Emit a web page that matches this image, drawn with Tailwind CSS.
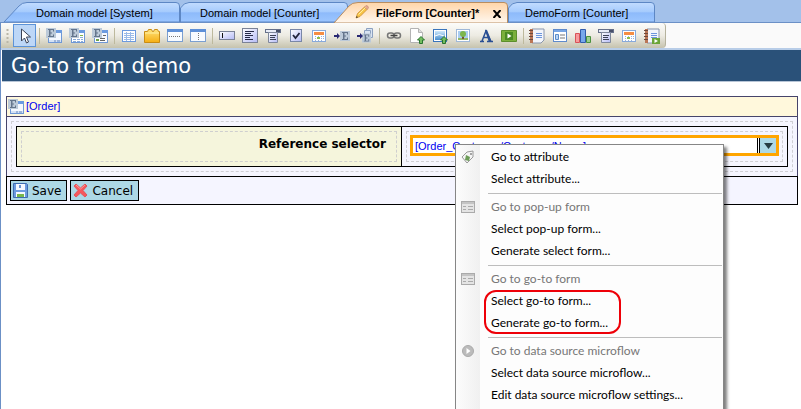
<!DOCTYPE html>
<html lang="en">
<head>
<meta charset="utf-8">
<title>FileForm [Counter]</title>
<script src="https://cdn.jsdelivr.net/npm/@tailwindcss/browser@4"></script>
</head>
<body class="relative flex h-screen flex-col overflow-hidden bg-white font-['Liberation_Sans',sans-serif] text-black">
<svg class="absolute h-0 w-0" aria-hidden="true">
  <defs>
    <linearGradient id="tabBlue" x1="0" y1="0" x2="0" y2="1"><stop offset="0" stop-color="#c2dcff"/><stop offset=".5" stop-color="#a4cafd"/><stop offset=".52" stop-color="#8dbafb"/><stop offset="1" stop-color="#9cc6ff"/></linearGradient>
    <linearGradient id="tabOrange" x1="0" y1="0" x2="0" y2="1"><stop offset="0" stop-color="#ffd5a8"/><stop offset=".5" stop-color="#ffe6cb"/><stop offset="1" stop-color="#fff8f0"/></linearGradient>
    <linearGradient id="gold" x1="0" y1="0" x2="0" y2="1"><stop offset="0" stop-color="#ffe27a"/><stop offset="1" stop-color="#f5ae13"/></linearGradient>
    <linearGradient id="lav" x1="0" y1="0" x2="1" y2="1"><stop offset="0" stop-color="#fff"/><stop offset="1" stop-color="#b4baf6"/></linearGradient>
    <linearGradient id="sky" x1="0" y1="0" x2="0" y2="1"><stop offset="0" stop-color="#cfe8fb"/><stop offset="1" stop-color="#4a90cf"/></linearGradient>
    <symbol id="ebadge" viewBox="0 0 10 10"><rect width="10" height="10" fill="#bccad9"/><path d="M2 1h6v2.500H7V2H4.500v2.500H6v1H4.500V8H7V6.500h1V9H2V8h1V2H2z" fill="#64758c"/></symbol>
    <symbol id="win" viewBox="0 0 16 14"><rect x=".5" y=".5" width="15" height="12" fill="#f8fbff" stroke="#7b9fd0"/><path d="M0 0h16v3H0z" fill="#5e90d8"/></symbol>
    <symbol id="dataview" viewBox="0 0 16 16"><rect x="2.500" y="2.500" width="13" height="12" fill="#f4f8ff" stroke="#6f98d6"/><path d="M3 12h12v2H3z" fill="#d5e2f5"/><path d="M9 2h7v3H9z" fill="#6c9be0"/><path d="M8 13h2m1 0h3" stroke="#6487bd"/><use href="#ebadge" width="10" height="10"/></symbol>
    <symbol id="uparrow" viewBox="0 0 8 8"><path d="M4 .5L7.500 4H5.500v3.500h-3V4H.5z" fill="#74bd60" stroke="#28752d"/></symbol>
    <symbol id="report" viewBox="0 0 16 16"><path d="M3 1h12v11l-3 3H3z" fill="#f3f5fb" stroke="#8a97ad"/><path d="M1 1h3v14H1z" fill="#bb7656"/><path d="M0 2.500h4m-4 3h4m-4 3h4m-4 3h4" stroke="#6f4a3d"/><path d="M7 5.500h6m-6 2h6m-6 2h6" stroke="#6c95dc"/></symbol>
    <symbol id="drop" viewBox="0 0 16 16"><rect x=".5" y="1.500" width="15" height="3" fill="#e9edf8" stroke="#66708a"/><path d="M11 2h4v2h-4z" fill="#474f69"/><path d="M3.500 4.500h9v10h-9z" fill="url(#lav)" stroke="#7f889c"/><path d="M5 7.500h6m-6 2h5m-5 2h6" stroke="#3d4358"/></symbol>
    <symbol id="calendar" viewBox="0 0 16 16"><rect x="1.500" y="2.500" width="13" height="11" fill="#fff" stroke="#88aadb"/><path d="M3 4h10v3H3z" fill="#f58d43"/><path d="M4.500 8v5m3-5v5m3-5v5m2-5v3" stroke="#98b3dc" stroke-dasharray="1 1"/></symbol>
    <symbol id="formgray" viewBox="0 0 14 12"><rect x=".5" y=".5" width="13" height="11" fill="#e4e4e4" stroke="#aaa"/><path d="M1 1h12v2H1z" fill="#c4c4c4"/><path d="M2 5.500h3m-3 3h3m2-3h5m-5 3h5" stroke="#aaa"/></symbol>
  </defs>
</svg>

<nav class="relative flex h-[22px] shrink-0 bg-[#a3c1ea] text-[11px]" aria-label="Open documents">
  <div class="relative ml-[3px] flex h-[22px] w-[177px] pt-1 pl-[33px]">
    <svg class="absolute inset-0 h-full w-full" viewBox="0 0 177 22" preserveAspectRatio="none"><path d="M1 22L16 6Q19 2.500 24 2.500H173Q176.500 2.500 176.500 6V22z" fill="url(#tabBlue)" stroke="#5d87c4"/></svg>
    <button class="relative h-[18px] whitespace-nowrap">Domain model [System]</button>
  </div>
  <div class="relative flex h-[22px] w-[168px] pt-1 pl-5">
    <svg class="absolute inset-0 h-full w-full" viewBox="0 0 168 22" preserveAspectRatio="none"><path d="M.5 22V8Q4 2.500 9 2.500H164Q167.500 2.500 167.500 6V22z" fill="url(#tabBlue)" stroke="#5d87c4"/></svg>
    <button class="relative h-[18px] whitespace-nowrap">Domain model [Counter]</button>
  </div>
  <div class="relative z-10 -ml-[15px] flex h-[23px] w-[175px] pt-1 pl-[21px] font-bold">
    <svg class="absolute inset-0 h-full w-full" viewBox="0 0 175 23" preserveAspectRatio="none"><path d="M1 23L16 6Q19 2.500 25 2.500H171Q174.500 2.500 174.500 6V23z" fill="url(#tabOrange)" stroke="#b88d60"/></svg>
    <svg class="relative h-4 w-4 shrink-0" viewBox="0 0 16 16"><path d="M2 14l1.500-4.500L10.500 3l2.500 2.500-7 7z" fill="#f8c548" stroke="#c98d31" stroke-width=".8"/><path d="M10.500 3L12 1.500q2.500 0 2.500 2.500L13 5.500z" fill="#e9a78f" stroke="#b98a70" stroke-width=".6"/><path d="M4.500 10.500l7-7" stroke="#fff0a5"/><path d="M2 14l.7-2L4 13.300z" fill="#333"/></svg>
    <button class="relative ml-[6px] h-[18px] whitespace-nowrap">FileForm [Counter]*</button>
    <button class="absolute top-[10px] right-[7px] h-2 w-2" aria-label="Close"><svg class="block h-2 w-2" viewBox="0 0 8 8"><path d="M.5 0l7 8m0-8l-7 8" stroke="#000" stroke-width="2"/></svg></button>
  </div>
  <div class="relative flex h-[22px] w-[147px] pt-1 pl-[17px]">
    <svg class="absolute inset-0 h-full w-full" viewBox="0 0 147 22" preserveAspectRatio="none"><path d="M.5 22V8Q4 2.500 9 2.500H143Q146.500 2.500 146.500 6V22z" fill="url(#tabBlue)" stroke="#5d87c4"/></svg>
    <button class="relative h-[18px] whitespace-nowrap">DemoForm [Counter]</button>
  </div>
</nav>

<div class="flex-1 border-l border-[#6b90c6]">
<div class="flex h-7 border-t border-b-2 border-t-[#6b90c6] border-b-[#b8cde8] bg-[#fafafa]">
  <div class="flex h-[25px] items-center rounded-r-sm border-r border-[#b5b29d] bg-linear-to-b from-[#fcfcfa] via-[#edebe3] to-[#c6c3ae] pr-[2px] pl-[5px]" role="toolbar" aria-label="Widgets">
    <svg class="mr-1 h-4 w-[3px]" viewBox="0 0 3 16"><path d="M1.500 1v14" stroke="#b9b6a8" stroke-width="2" stroke-dasharray="2 2"/></svg>
    <button class="flex h-[23px] w-[23px] items-center justify-center border border-[#5c93d8] bg-[#bdd7f7]" aria-label="Select"><svg class="h-4 w-4" viewBox="0 0 16 16"><path d="M4.500 1v12l3-3 2 5 2-1-2-5h4z" fill="#fff" stroke="#3b4356"/></svg></button>
    <span class="ml-[3px] h-4 w-px bg-[#bdb99d]"></span><span class="w-[2px]"></span>
    <button class="flex h-[23px] w-[23px] items-center justify-center" aria-label="Data view"><svg class="h-4 w-4"><use href="#dataview"/></svg></button>
    <button class="flex h-[23px] w-[23px] items-center justify-center" aria-label="Data grid"><svg class="h-4 w-4" viewBox="0 0 16 16"><use href="#dataview"/><path d="M3 10h12v4H3zM10 5h5v5h-5z" fill="#fff"/><path d="M4 11.500h10m-10 2h10M11 7.500h3m-3 2h3" stroke="#8aabd8" stroke-dasharray="3 1"/><path d="M11 7.500h3" stroke="#80b448"/></svg></button>
    <button class="flex h-[23px] w-[23px] items-center justify-center" aria-label="Template grid"><svg class="h-4 w-4" viewBox="0 0 16 16"><use href="#dataview"/><path d="M3 10h12v4H3z" fill="#fff"/><path d="M4 12h3" stroke="#6ea34b" stroke-width="2"/><path d="M11 7.500h3M8 10.500h5m-5 2h5" stroke="#666"/></svg></button>
    <span class="ml-[3px] h-4 w-px bg-[#bdb99d]"></span><span class="w-[2px]"></span>
    <button class="flex h-[23px] w-[23px] items-center justify-center" aria-label="Table"><svg class="h-4 w-4" viewBox="0 0 16 16"><rect x="1.500" y="2.500" width="13" height="11" fill="#fff" stroke="#6c9ade"/><path d="M3 5.500h10m-10 2h10m-10 2h10m-10 2h10M5.500 4v9m4-9v9" stroke="#9bbbe8"/></svg></button>
    <button class="flex h-[23px] w-[23px] items-center justify-center" aria-label="Tab control"><svg class="h-4 w-4" viewBox="0 0 16 16"><path d="M.5 3.500h3l1-2h3l1 2h1l1-2h3l1 2h1v11H.5z" fill="url(#gold)" stroke="#c98c13"/><path d="M1 5h14" stroke="#fff0a0"/></svg></button>
    <button class="flex h-[23px] w-[23px] items-center justify-center" aria-label="Vertical split"><svg class="h-4 w-4" viewBox="0 0 16 16"><use href="#win" y="1" width="16" height="14"/><path d="M2 8.500h12" stroke="#777" stroke-dasharray="1 1"/></svg></button>
    <button class="flex h-[23px] w-[23px] items-center justify-center" aria-label="Horizontal split"><svg class="h-4 w-4" viewBox="0 0 16 16"><use href="#win" y="1" width="16" height="14"/><path d="M8.500 5v8" stroke="#777" stroke-dasharray="1 1"/></svg></button>
    <span class="ml-[3px] h-4 w-px bg-[#bdb99d]"></span><span class="w-[2px]"></span>
    <button class="flex h-[23px] w-[23px] items-center justify-center" aria-label="Text box"><svg class="h-4 w-4" viewBox="0 0 16 16"><rect x=".5" y="3.500" width="15" height="8" fill="url(#lav)" stroke="#7a8296"/><path d="M3.500 5v5" stroke="#111"/></svg></button>
    <button class="flex h-[23px] w-[23px] items-center justify-center" aria-label="Text area"><svg class="h-4 w-4" viewBox="0 0 16 16"><rect x=".5" y=".5" width="15" height="14" fill="url(#lav)" stroke="#7a8296"/><path d="M3 3.500h9m-9 2h6m-6 2h8m-8 2h5m-5 2h8" stroke="#262a46"/></svg></button>
    <button class="flex h-[23px] w-[23px] items-center justify-center" aria-label="Drop-down"><svg class="h-4 w-4"><use href="#drop"/></svg></button>
    <button class="flex h-[23px] w-[23px] items-center justify-center" aria-label="Check box"><svg class="h-4 w-4" viewBox="0 0 16 16"><rect x="2.500" y="1.500" width="11" height="12" fill="url(#lav)" stroke="#7987a7"/><path d="M5 7l2.500 3 4-5" fill="none" stroke="#21243c" stroke-width="1.800"/></svg></button>
    <button class="flex h-[23px] w-[23px] items-center justify-center" aria-label="Date picker"><svg class="h-4 w-4" viewBox="0 0 16 16"><use href="#calendar"/><path d="M6 9h3v2H6z" fill="#8fbd4a"/></svg></button>
    <button class="flex h-[23px] w-[23px] items-center justify-center" aria-label="Reference selector"><svg class="h-4 w-4" viewBox="0 0 16 16"><use href="#ebadge" x="6" y="3" width="10" height="10"/><path d="M0 8h3" stroke="#282873" stroke-width="2"/><path d="M3 5l3 3-3 3z" fill="#282873"/></svg></button>
    <button class="flex h-[23px] w-[23px] items-center justify-center" aria-label="Reference set selector"><svg class="h-4 w-4" viewBox="0 0 16 16"><path d="M9.500.5h6v9h-6z" fill="#d9e4f2" stroke="#8ca1c0"/><path d="M7.500 2.500h6v9h-6z" fill="#d9e4f2" stroke="#8ca1c0"/><use href="#ebadge" x="5" y="5" width="9" height="10"/><path d="M0 8h3" stroke="#282873" stroke-width="2"/><path d="M3 5l3 3-3 3z" fill="#282873"/></svg></button>
    <span class="ml-[3px] h-4 w-px bg-[#bdb99d]"></span><span class="w-[2px]"></span>
    <button class="flex h-[23px] w-[23px] items-center justify-center" aria-label="Link"><svg class="h-4 w-4" viewBox="0 0 16 16"><g fill="none" stroke="#777" stroke-width="1.500"><rect x="1.500" y="5" width="6.500" height="5" rx="2.500"/><rect x="8" y="5" width="6.500" height="5" rx="2.500"/><path d="M4.500 7.500h7" stroke="#444"/></g></svg></button>
    <button class="flex h-[23px] w-[23px] items-center justify-center" aria-label="File upload"><svg class="h-4 w-4" viewBox="0 0 16 16"><path d="M1.500.5h8l4 4v10h-12z" fill="#fff" stroke="#b3b3b3"/><path d="M9.500.5v4h4" fill="#ddd" stroke="#b3b3b3"/><use href="#uparrow" x="8" y="8" width="8" height="8"/></svg></button>
    <button class="flex h-[23px] w-[23px] items-center justify-center" aria-label="Image upload"><svg class="h-4 w-4" viewBox="0 0 16 16"><rect x="1.500" y="1.500" width="13" height="12" fill="#fff" stroke="#3975bc"/><path d="M3 3h10v9H3z" fill="url(#sky)"/><path d="M3 8q4-3 9 0" stroke="#fff" fill="none"/><use href="#uparrow" x="8" y="8" width="8" height="8"/></svg></button>
    <button class="flex h-[23px] w-[23px] items-center justify-center" aria-label="Image viewer"><svg class="h-4 w-4" viewBox="0 0 16 16"><rect x="1.500" y="1.500" width="13" height="12" fill="#fff" stroke="#9fb8d8"/><path d="M3 3h10v9H3z" fill="#a9cdf0"/><path d="M3 10h10v2H3z" fill="#93b865"/><path d="M8 7v4" stroke="#735434" stroke-width="2"/><circle cx="8" cy="6" r="3" fill="#7cb64d"/></svg></button>
    <button class="flex h-[23px] w-[23px] items-center justify-center" aria-label="Text"><svg class="h-4 w-4" viewBox="0 0 16 16"><path d="M2 13.500h4M9 13.500h6M4 13L8 3l4.500 10M5.500 9.500h5" fill="none" stroke="#294e93" stroke-width="1.500"/><path d="M7 2h2l4.500 11h-3z" fill="#294e93"/></svg></button>
    <button class="flex h-[23px] w-[23px] items-center justify-center" aria-label="Action button"><svg class="h-4 w-4" viewBox="0 0 16 16"><path d="M.5 2.500h15v11H.5z" fill="#7bb03c" stroke="#5d8f2d"/><path d="M4 4h8v8H4z" fill="#4b8a24"/><path d="M6.500 5.500l4 2.500-4 2.500z" fill="#fff"/></svg></button>
    <span class="ml-[3px] h-4 w-px bg-[#bdb99d]"></span><span class="w-px"></span>
    <button class="flex h-[23px] w-[23px] items-center justify-center" aria-label="Report"><svg class="h-4 w-4"><use href="#report"/></svg></button>
    <button class="flex h-[23px] w-[23px] items-center justify-center" aria-label="Report pane"><svg class="h-4 w-4" viewBox="0 0 16 16"><rect x="1.500" y="1.500" width="13" height="12" fill="#fff" stroke="#5f8bcb"/><path d="M2 2h12v2H2z" fill="#78a6e5"/><path d="M3.500 6.500h3v5h-3z" fill="#bad5f5" stroke="#5a8cca"/><path d="M8 7h5m-5 3h5" stroke="#bbb" stroke-width="2"/></svg></button>
    <button class="flex h-[23px] w-[23px] items-center justify-center" aria-label="Chart"><svg class="h-4 w-4" viewBox="0 0 16 16"><path d="M.5 5.500h4v9h-4z" fill="#f69b9d" stroke="#d95258"/><path d="M5.500 1.500h5v13h-5z" fill="#77a8eb" stroke="#315cad"/><path d="M11.500 8.500h4v6h-4z" fill="#9ccf90" stroke="#4a923f"/></svg></button>
    <button class="flex h-[23px] w-[23px] items-center justify-center" aria-label="Report drop-down"><svg class="h-4 w-4"><use href="#drop"/></svg></button>
    <button class="flex h-[23px] w-[23px] items-center justify-center" aria-label="Report date"><svg class="h-4 w-4" viewBox="0 0 16 16"><use href="#calendar"/><path d="M6 9h3v2H6z" fill="#8fbd4a"/></svg></button>
    <button class="flex h-[23px] w-[23px] items-center justify-center" aria-label="Generate report"><svg class="h-4 w-4" viewBox="0 0 16 16"><use href="#report"/><path d="M8 10h8v6H8z" fill="#6ba537"/><path d="M10.500 11l3.500 2-3.500 2z" fill="#fff"/></svg></button>
  </div>
</div>

<main class="ml-px">
  <h1 class="h-8 border-b border-[#b7c5d6] bg-[#2a5179] pl-[9px] font-['DejaVu_Sans',sans-serif] text-[21px] leading-8 text-white">Go-to form demo</h1>
  <section class="mt-[14px] mr-[3px] ml-1">
    <div class="border border-b-0 border-[#46446b] bg-[#f5f5ff]">
      <div class="flex h-5 items-center gap-[2px] border-b border-[#46446b] bg-[#fff8dc] pl-px text-[11px] text-[#0000f0]">
        <svg class="h-4 w-4"><use href="#dataview"/></svg><span>[Order]</span>
      </div>
      <div class="p-1">
        <div class="border border-dashed border-[#cfcfd4] p-1">
          <div class="grid grid-cols-2 border border-black">
            <div class="border-r border-black bg-[#f5f5dc] p-1">
              <div class="h-[31px] border border-dashed border-[#cfcfcf] pr-[10px] text-right font-['DejaVu_Sans',sans-serif] text-[12px] leading-6 font-bold"><label for="ref">Reference selector</label></div>
            </div>
            <div class="p-1">
              <div class="h-[31px] border border-dashed border-[#cfcfd4] p-[3px]">
                <div class="relative flex h-[21px] border-3 border-[#ffa500] bg-white">
                  <select id="ref" class="h-full w-full appearance-none bg-transparent pl-[2px] text-[11px] text-[#0000f0]"><option>[Order_Customer/Customer/Name]</option></select>
                  <span class="pointer-events-none absolute inset-y-0 right-0 flex w-[19px] items-center justify-center border-l border-black bg-[#add8e6] shadow-[inset_1px_0_white,inset_2px_0_black]"><svg class="ml-[2px] h-[6px] w-[9px]" viewBox="0 0 9 6"><path d="M0 0h9L4.500 6z" fill="#263c43"/></svg></span>
                </div>
              </div>
            </div>
          </div>
        </div>
      </div>
    </div>
    <div class="flex gap-[3px] border border-black bg-[#f5f5ff] p-[3px] font-['DejaVu_Sans',sans-serif] text-[12px]">
      <button class="flex h-[21px] items-center gap-1 border border-black bg-[#add8e6] pr-[5px] pl-[2px]"><svg class="h-[15px] w-[15px]" viewBox="0 0 15 15"><path d="M.5.5h13l1 1v13H.5z" fill="#6c9be0" stroke="#3f6cb0"/><path d="M3 1h9v6H3zM3 9h9v5H3z" fill="#f6f9ff"/><path d="M4 11h7v3H4z" fill="#76b64c"/><path d="M6 2h2v3H6z" fill="#6b94d1"/></svg>Save</button>
      <button class="flex h-[21px] items-center gap-1 border border-black bg-[#add8e6] pr-[5px] pl-[2px]"><svg class="h-[15px] w-[15px]" viewBox="0 0 15 15"><path d="M1 3l2-2 4.500 4L12 1l2 2-4 4.500 4 4.500-2 2-4.500-4L3 14l-2-2 4-4.500z" fill="#f7575c" stroke="#e0565b"/><path d="M3 2l4.500 4L12 2" stroke="#ff9a9a" fill="none"/></svg>Cancel</button>
    </div>
  </section>
</main>
</div>

<div role="menu" class="absolute top-36 left-[455px] z-20 w-[269px] border border-b-0 border-[#868686] bg-[linear-gradient(90deg,#fcfcfc_0,#f0f0f0_24px,#fdfdfd_24px)] pt-px font-['Lato',sans-serif] text-[12px] leading-[22px] shadow-[3px_3px_3px_rgba(0,0,0,0.5)]">
  <button role="menuitem" class="grid h-[22px] w-full grid-cols-[24px_1fr] items-center gap-[11px] text-left"><svg class="ml-[5px] h-[14px] w-[14px]" viewBox="0 0 14 14"><path d="M1 7l5-5 6-1v6l-6 6z" fill="#f5f5f5" stroke="#999"/><path d="M5 5l4 2-1 4-4-1z" fill="#6d9d58"/><circle cx="10" cy="4" r="1" fill="#888"/></svg>Go to attribute</button>
  <button role="menuitem" class="block h-[22px] w-full pl-[35px] text-left">Select attribute...</button>
  <div role="separator" class="ml-8 mr-px flex h-[6px] items-center"><span class="h-px w-full bg-[#bdbdbd]"></span></div>
  <button role="menuitem" disabled class="grid h-[22px] w-full grid-cols-[24px_1fr] items-center gap-[11px] text-left text-[#777]"><svg class="ml-[5px] h-3 w-[14px]"><use href="#formgray"/></svg>Go to pop-up form</button>
  <button role="menuitem" class="block h-[22px] w-full pl-[35px] text-left">Select pop-up form...</button>
  <button role="menuitem" class="block h-[22px] w-full pl-[35px] text-left">Generate select form...</button>
  <div role="separator" class="ml-8 mr-px flex h-[6px] items-center"><span class="h-px w-full bg-[#bdbdbd]"></span></div>
  <button role="menuitem" disabled class="grid h-[22px] w-full grid-cols-[24px_1fr] items-center gap-[11px] text-left text-[#777]"><svg class="ml-[5px] h-3 w-[14px]"><use href="#formgray"/></svg>Go to go-to form</button>
  <div class="relative">
    <button role="menuitem" class="block h-[22px] w-full pl-[35px] text-left">Select go-to form...</button>
    <button role="menuitem" class="block h-[22px] w-full pl-[35px] text-left">Generate go-to form...</button>
    <span class="pointer-events-none absolute inset-y-0 left-7 w-[137px] rounded-xl border-2 border-[#ee0008]"></span>
  </div>
  <div role="separator" class="ml-8 mr-px flex h-[6px] items-center"><span class="h-px w-full bg-[#bdbdbd]"></span></div>
  <button role="menuitem" disabled class="grid h-[22px] w-full grid-cols-[24px_1fr] items-center gap-[11px] text-left text-[#777]"><svg class="ml-[6px] h-3 w-3" viewBox="0 0 12 12"><circle cx="6" cy="6" r="5.500" fill="#bbb" stroke="#aaa"/><path d="M4.500 3l4 3-4 3z" fill="#fff"/></svg>Go to data source microflow</button>
  <button role="menuitem" class="block h-[22px] w-full pl-[35px] text-left">Select data source microflow...</button>
  <button role="menuitem" class="block h-[22px] w-full pl-[35px] text-left">Edit data source microflow settings...</button>
  <div class="h-2"></div>
</div>
</body>
</html>
